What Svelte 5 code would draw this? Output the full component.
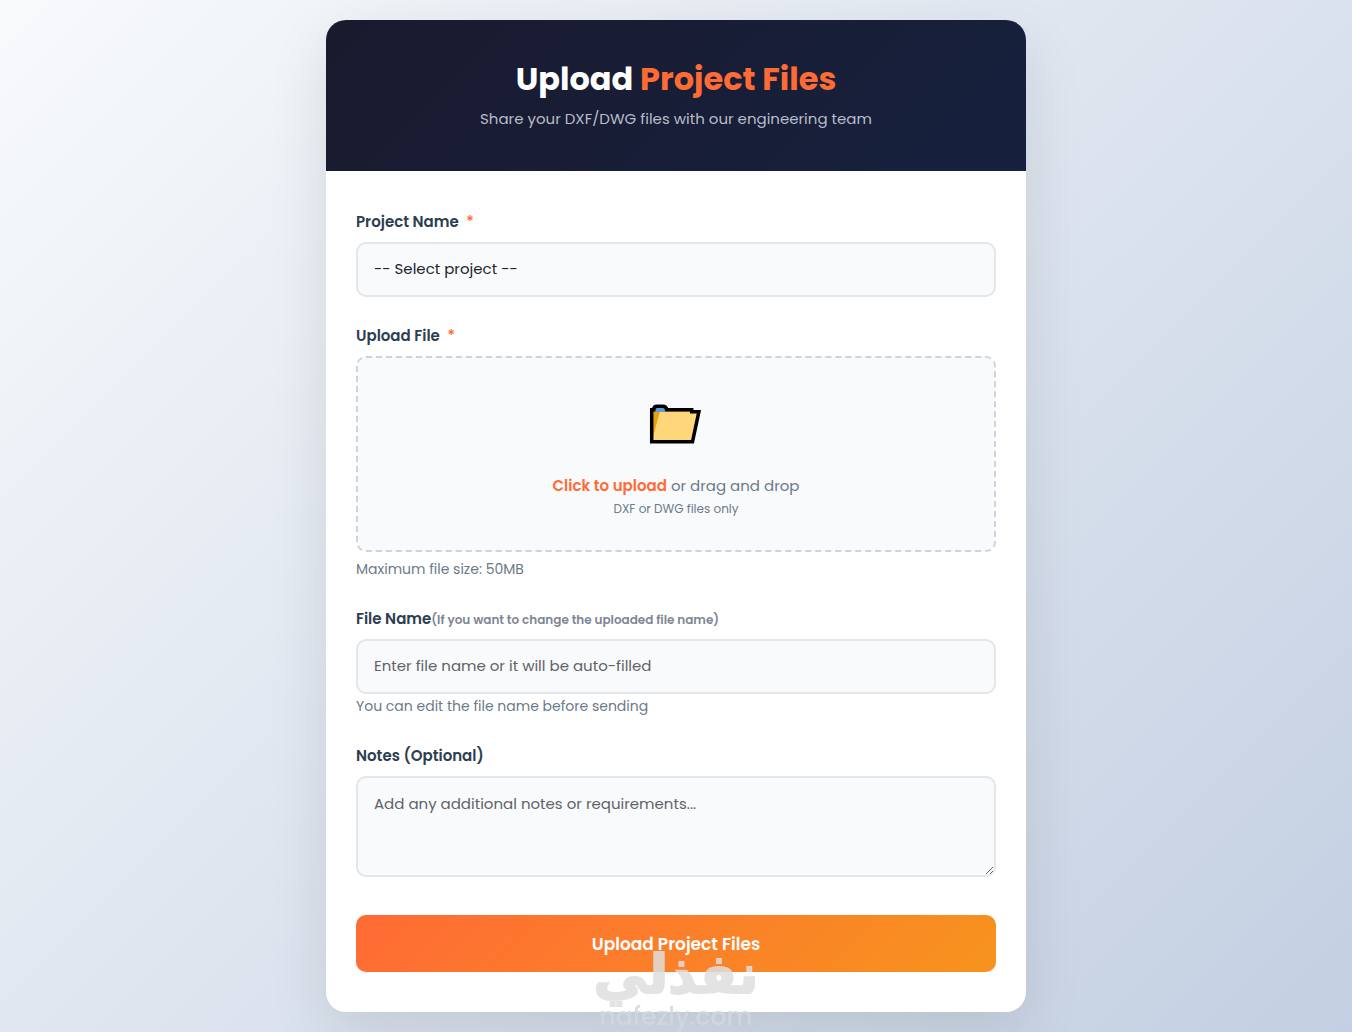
<script lang="ts">
  let project = $state('');
  let fileName = $state('');
  let notes = $state('');
  let dragging = $state(false);

  function setFile(files: FileList | null | undefined) {
    const file = files?.[0];
    if (file && !fileName) fileName = file.name.replace(/\.[^.]+$/, '');
  }

  function handleDrop(e: DragEvent) {
    e.preventDefault();
    dragging = false;
    setFile(e.dataTransfer?.files);
  }
</script>

<main class="page">
  <div class="card">
    <header class="card-header">
      <h1>Upload <span>Project Files</span></h1>
      <p>Share your DXF/DWG files with our engineering team</p>
    </header>

    <form class="form" onsubmit={(e) => e.preventDefault()}>
      <div class="group">
        <label class="label" for="project">Project Name <span class="required">*</span></label>
        <select id="project" class="control" bind:value={project} required>
          <option value="">-- Select project --</option>
        </select>
      </div>

      <div class="group">
        <label class="label" for="file">Upload File <span class="required">*</span></label>
        <label
          class="dropzone"
          class:dragging
          ondragover={(e) => { e.preventDefault(); dragging = true; }}
          ondragleave={() => (dragging = false)}
          ondrop={handleDrop}
        >
          <input
            id="file"
            class="file-input"
            type="file"
            accept=".dxf,.dwg"
            onchange={(e) => setFile(e.currentTarget.files)}
          />
          <svg class="folder" viewBox="0 0 72 72" aria-hidden="true">
            <path d="M12 53V22h40v2h7l-7 30H12z" fill="#ffd679" />
            <path d="M12 52V23h8z" fill="#e9a20c" />
            <path d="M12 22h40v2H19l-7 28z" fill="#e9a20c" />
            <path d="M15 24v-4l2-2h6l2 2v4z" fill="#5c9edc" />
            <path
              d="M11.700 53.700V21.700h2q0-3.500 3.500-3.500h5.500q3.500 0 4 3.500h25v2h7.200L52.500 53.700z"
              fill="none"
              stroke="#000"
              stroke-width="3.500"
            />
          </svg>
          <span class="drop-text"><strong>Click to upload</strong> or drag and drop</span>
          <span class="drop-hint">DXF or DWG files only</span>
        </label>
        <p class="help">Maximum file size: 50MB</p>
      </div>

      <div class="group">
        <label class="label" for="filename">File Name<small>(If you want to change the uploaded file name)</small></label>
        <input
          id="filename"
          class="control"
          type="text"
          placeholder="Enter file name or it will be auto-filled"
          bind:value={fileName}
        />
        <p class="help">You can edit the file name before sending</p>
      </div>

      <div class="group">
        <label class="label" for="notes">Notes (Optional)</label>
        <textarea
          id="notes"
          class="control"
          placeholder="Add any additional notes or requirements..."
          bind:value={notes}
        ></textarea>
      </div>

      <button class="submit" type="submit">Upload Project Files</button>
    </form>
  </div>
</main>

<div class="watermark" aria-hidden="true">
  <span class="mark-ar" lang="ar" dir="rtl">نفذلي</span>
  <span class="mark-en">nafezly.com</span>
</div>

<style>
  :global(body) {
    margin: 0;
  }

  .page,
  .page * {
    box-sizing: border-box;
  }

  .page {
    min-height: 100vh;
    padding: 20px;
    background: linear-gradient(135deg, #f8fafc 0%, #c3cfe2 100%);
    font-family: Poppins, Inter, sans-serif;
    color: #2c3e50;
  }

  .card {
    max-width: 700px;
    margin: 0 auto;
    background: #fff;
    border-radius: 20px;
    box-shadow: 0 20px 60px rgba(0, 0, 0, 0.1);
    overflow: hidden;
  }

  .card-header {
    padding: 40px 30px;
    background: linear-gradient(135deg, #1a1a2e 0%, #16213e 100%);
    text-align: center;
  }

  h1 {
    margin: 0 0 8px;
    font-size: 32px;
    font-weight: 700;
    line-height: 38px;
    color: #fff;
  }

  h1 span {
    color: #ff6b35;
  }

  .card-header p {
    margin: 0;
    font-size: 15px;
    line-height: 25px;
    color: #b8bccb;
  }

  .form {
    padding: 40px 30px;
  }

  .group {
    display: flex;
    flex-direction: column;
    margin-bottom: 28px;
  }

  .label {
    margin-bottom: 10px;
    font-size: 15px;
    font-weight: 600;
    line-height: 21px;
  }

  .label small {
    font-size: 12px;
    line-height: 1;
    color: #7f8694;
  }

  .required {
    margin-left: 4px;
    font-weight: 500;
    color: #ff6b35;
  }

  .control {
    width: 100%;
    height: 55px;
    margin: 0;
    padding: 0 16px 2px;
    border: 2px solid #e3e7ea;
    border-radius: 10px;
    background: #f8fafc;
    font-family: inherit;
    font-size: 15px;
    line-height: 24px;
    color: #212529;
    appearance: none;
  }

  .control::placeholder {
    color: #5f6368;
    opacity: 1;
  }

  .control:focus {
    outline: none;
    border-color: #ff6b35;
  }

  textarea.control {
    height: 101px;
    padding: 14px 16px;
    resize: vertical;
  }

  .dropzone {
    display: flex;
    flex-direction: column;
    align-items: center;
    position: relative;
    margin-bottom: 5px;
    padding: 30px;
    border: 2px dashed #ced4da;
    border-radius: 10px;
    background: #f8fafc;
    color: #6c7a89;
    cursor: pointer;
  }

  .dropzone.dragging {
    border-color: #ff6b35;
  }

  .file-input {
    position: absolute;
    inset: 0;
    width: 100%;
    height: 100%;
    opacity: 0;
    cursor: pointer;
  }

  .folder {
    width: 72px;
    height: 72px;
    margin-bottom: 13px;
  }

  .drop-text {
    font-size: 15px;
    line-height: 25px;
  }

  .drop-text strong {
    font-weight: 600;
    color: #ff6b35;
  }

  .drop-hint {
    font-size: 12px;
    line-height: 22px;
  }

  .help {
    margin: 2px 0 0;
    font-size: 14px;
    line-height: 21px;
    color: #6c7a89;
  }

  .submit {
    width: 100%;
    height: 57px;
    margin-top: 10px;
    border: 0;
    border-radius: 10px;
    background: linear-gradient(135deg, #ff6b35 0%, #f7931e 100%);
    font-family: inherit;
    font-size: 17px;
    font-weight: 600;
    color: #fff;
    cursor: pointer;
  }

  .watermark {
    position: fixed;
    right: 0;
    bottom: 0;
    left: 0;
    display: flex;
    flex-direction: column;
    align-items: center;
    color: #dedede;
    opacity: 0.85;
    pointer-events: none;
  }

  .mark-ar {
    font-family: "DejaVu Sans", sans-serif;
    font-size: 54px;
    font-weight: 700;
    line-height: 54px;
    -webkit-text-stroke: 2px #dedede;
  }

  .mark-en {
    font-family: Poppins, Inter, sans-serif;
    font-size: 25px;
    font-weight: 500;
    line-height: 30px;
    color: #d3d7de;
  }
</style>
